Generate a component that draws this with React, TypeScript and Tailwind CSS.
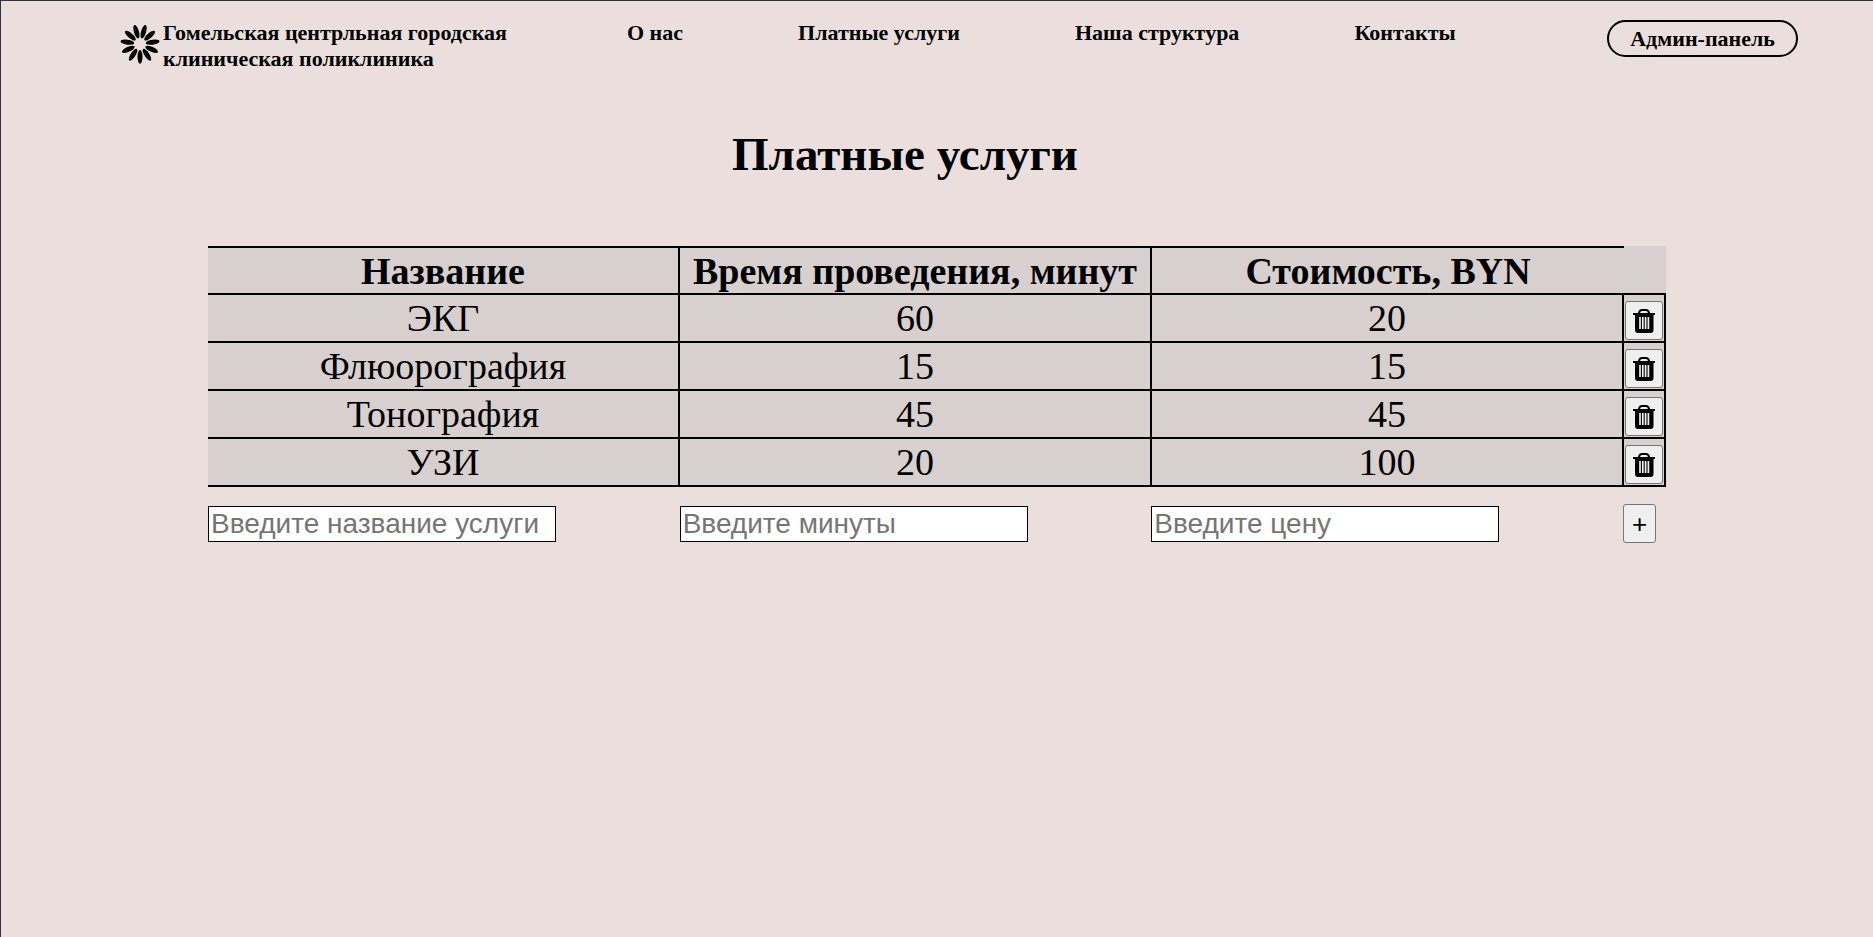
import { useState } from "react";

type Service = { name: string; minutes: string; price: string };

const initialServices: Service[] = [
  { name: "ЭКГ", minutes: "60", price: "20" },
  { name: "Флюорография", minutes: "15", price: "15" },
  { name: "Тонография", minutes: "45", price: "45" },
  { name: "УЗИ", minutes: "20", price: "100" },
];

const links = ["О нас", "Платные услуги", "Наша структура", "Контакты"];

const petals = Array.from({ length: 11 }, (_, i) => 180 + (i * 360) / 11);

function Logo() {
  return (
    <svg viewBox="0 0 40 40" className="mt-1 size-10 shrink-0" aria-hidden="true">
      {petals.map((angle) => (
        <ellipse key={angle} cx="20" cy="7.2" rx="2.5" ry="6.9" transform={`rotate(${angle} 20 20)`} />
      ))}
    </svg>
  );
}

function TrashIcon() {
  return (
    <svg viewBox="0 0 22 24" className="h-6 w-[22px]" aria-hidden="true">
      <path d="M6 5V4Q6.500 1 9 1H13Q15.500 1 16 4V5" fill="none" stroke="#000" strokeWidth="2" />
      <path d="M0 4H22V6H20.500V21Q20.500 24 17.500 24H5Q2 24 2 21V6H0Z" />
      <path d="M7 8V20M9.800 8V20M12.600 8V20M15.400 8V20" stroke="#efefef" strokeWidth="1.7" />
    </svg>
  );
}

const cell = "h-12 border-b-2 border-black p-0 leading-[44px]";
const head = "h-[49px] border-y-2 border-black p-0 leading-[44px] font-bold";
const field =
  "block h-9 w-[348px] max-w-full border border-black bg-white px-0.5 font-['Liberation_Sans',sans-serif] text-[28px] leading-8 placeholder:text-[#757575]";

export default function App() {
  const [services, setServices] = useState(initialServices);
  const [draft, setDraft] = useState<Service>({ name: "", minutes: "", price: "" });

  const add = () => {
    if (!draft.name) return;
    setServices([...services, draft]);
    setDraft({ name: "", minutes: "", price: "" });
  };

  return (
    <div className="min-h-screen border-t border-l border-[#33303f] bg-[#eadfdd] font-['Liberation_Serif',serif] text-black">
      <header className="flex items-start pt-[19px] pr-[75px] pl-[119px] text-[22px] leading-[26px] font-bold">
        <a href="#" className="flex items-start gap-[3px]">
          <Logo />
          <span>
            Гомельская центрльная городская
            <br />
            клиническая поликлиника
          </span>
        </a>
        <nav className="ml-[120px] flex gap-[115px]">
          {links.map((text) => (
            <a key={text} href="#" className="whitespace-nowrap">
              {text}
            </a>
          ))}
        </nav>
        <button
          type="button"
          className="ml-auto h-[37px] rounded-full border-2 border-black px-[21px] leading-[33px] whitespace-nowrap"
        >
          Админ-панель
        </button>
      </header>

      <main className="mx-auto max-w-[1458px]">
        <h1 className="mt-[54px] pr-16 text-center text-[47px] leading-[56px] font-bold">Платные услуги</h1>

        <table className="mt-16 w-full table-fixed border-separate border-spacing-0 bg-[#d8d0ce] text-center text-[38px]">
          <colgroup>
            <col />
            <col />
            <col />
            <col className="w-[42px]" />
          </colgroup>
          <thead>
            <tr>
              <th className={`${head} border-r-2`}>Название</th>
              <th className={`${head} border-r-2`}>Время проведения, минут</th>
              <th className={head}>Стоимость, BYN</th>
              <th className="border-b-2 border-black p-0" aria-label="Действия" />
            </tr>
          </thead>
          <tbody>
            {services.map((service, index) => (
              <tr key={index}>
                <td className={`${cell} border-r-2`}>{service.name}</td>
                <td className={`${cell} border-r-2`}>{service.minutes}</td>
                <td className={`${cell} border-r-2`}>{service.price}</td>
                <td className="border-r-2 border-b-2 border-black p-0 pb-px pl-px align-bottom">
                  <button
                    type="button"
                    aria-label={`Удалить ${service.name}`}
                    onClick={() => setServices(services.filter((_, i) => i !== index))}
                    className="flex h-[39px] w-[38px] items-center justify-center rounded-[3px] border border-[#767676] bg-[#efefef]"
                  >
                    <TrashIcon />
                  </button>
                </td>
              </tr>
            ))}
          </tbody>
        </table>

        <form
          className="mt-[17px] grid grid-cols-[1fr_1fr_1fr_43px] items-center"
          onSubmit={(event) => {
            event.preventDefault();
            add();
          }}
        >
          <input
            aria-label="Название услуги"
            placeholder="Введите название услуги"
            value={draft.name}
            onChange={(event) => setDraft({ ...draft, name: event.target.value })}
            className={field}
          />
          <input
            aria-label="Минуты"
            placeholder="Введите минуты"
            value={draft.minutes}
            onChange={(event) => setDraft({ ...draft, minutes: event.target.value })}
            className={field}
          />
          <input
            aria-label="Цена"
            placeholder="Введите цену"
            value={draft.price}
            onChange={(event) => setDraft({ ...draft, price: event.target.value })}
            className={field}
          />
          <button
            type="submit"
            className="h-[39px] w-[33px] rounded-[3px] border border-[#767676] bg-[#efefef] font-['Liberation_Sans',sans-serif] text-[26px] leading-none"
          >
            +
          </button>
        </form>
      </main>
    </div>
  );
}
